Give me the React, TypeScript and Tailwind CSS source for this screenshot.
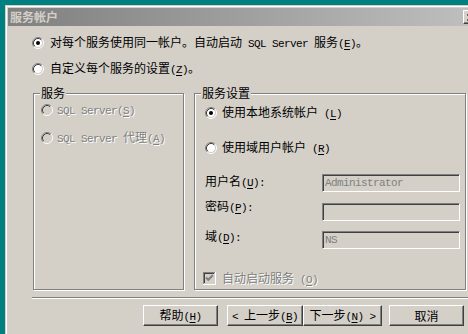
import React from "react";

const LATIN = "font-['Liberation_Mono',monospace] text-[11px] tracking-[-0.6px]";
const DIS = "text-[#808080] [text-shadow:1px_1px_0_#fff]";

function T({ s, className = "" }: { s: string; className?: string }) {
  const out: React.ReactNode[] = [];
  let i = 0;
  let k = 0;
  while (i < s.length) {
    const c = s[i];
    if (c === "&") {
      out.push(
        <span key={k++} className={LATIN + " underline underline-offset-2"}>
          {s[i + 1]}
        </span>
      );
      i += 2;
      continue;
    }
    const isAscii = c.charCodeAt(0) < 128;
    let j = i;
    while (j < s.length && s[j] !== "&" && (s.charCodeAt(j) < 128) === isAscii) j++;
    out.push(
      <span key={k++} className={isAscii ? LATIN : ""}>
        {s.slice(i, j)}
      </span>
    );
    i = j;
  }
  return <span className={"whitespace-pre " + className}>{out}</span>;
}

function Radio({ checked, disabled }: { checked?: boolean; disabled?: boolean }) {
  return (
    <svg width="12" height="12" viewBox="0 0 12 12" className="shrink-0">
      <circle cx="6" cy="6" r="4.2" fill={disabled ? "#d4d0c8" : "#ffffff"} />
      <path d="M2.11 9.89 A5.5 5.5 0 0 1 9.89 2.11" stroke="#808080" fill="none" />
      <path d="M9.89 2.11 A5.5 5.5 0 0 1 2.11 9.89" stroke="#ffffff" fill="none" />
      <path d="M2.82 9.18 A4.5 4.5 0 0 1 9.18 2.82" stroke="#404040" fill="none" />
      <path d="M9.18 2.82 A4.5 4.5 0 0 1 2.82 9.18" stroke="#d4d0c8" fill="none" />
      {checked && <circle cx="6" cy="6" r="2" fill={disabled ? "#808080" : "#000"} />}
    </svg>
  );
}

function Check() {
  return (
    <svg width="13" height="13" viewBox="0 0 13 13" className="shrink-0">
      <rect x="0" y="0" width="13" height="13" fill="#d4d0c8" />
      <path d="M0 0.5 H12 M0.5 0 V12" stroke="#808080" />
      <path d="M1 1.5 H11 M1.5 1 V11" stroke="#404040" />
      <path d="M0 12.5 H13 M12.5 0 V13" stroke="#ffffff" />
      <path d="M1 11.5 H12 M11.5 1 V12" stroke="#d4d0c8" />
      <path d="M3 5.5 L5.3 7.8 L9.8 3.3" stroke="#808080" strokeWidth="2" fill="none" />
    </svg>
  );
}

function Btn({ w, s }: { w: string; s: string }) {
  return (
    <div
      className={
        w +
        " h-[21px] flex items-center justify-center bg-[#d4d0c8] border border-t-white border-l-white border-r-[#404040] border-b-[#404040] shadow-[inset_-1px_-1px_0_#808080] text-black"
      }
    >
      <T s={s} />
    </div>
  );
}

function Field({ v }: { v?: string }) {
  return (
    <div className="w-[138px] h-[18px] border border-t-[#808080] border-l-[#808080] border-b-white border-r-white shadow-[inset_1px_1px_0_#404040,inset_-1px_-1px_0_#d4d0c8] bg-[#d4d0c8] flex items-center pl-[2px]">
      {v && <span className={LATIN + " text-[#808080]"}>{v}</span>}
    </div>
  );
}

function Group({ w, label, children }: { w: string; label: string; children: React.ReactNode }) {
  return (
    <div
      className={
        w +
        " h-[197px] relative border border-[#808080] shadow-[1px_1px_0_#fff,inset_1px_1px_0_#fff]"
      }
    >
      <div className="absolute top-[-8px] left-[6px] px-[1px] bg-[#d4d0c8] leading-[14px]">
        <T s={label} />
      </div>
      {children}
    </div>
  );
}

export default function App() {
  return (
    <div className="w-[468px] h-[334px] bg-[#008080] overflow-hidden pt-[5px] pl-[5px] font-['Noto_Sans_CJK_SC',sans-serif] text-[12px] leading-[14px] text-black">
      <div className="w-[478px] h-[340px] bg-[#d4d0c8] border-t border-l border-[#d4d0c8] shadow-[inset_1px_1px_0_#fff] p-[2px]">
        <div className="h-[18px] flex items-center justify-between bg-linear-to-r from-[#808080] to-[#c0c0c0] pl-[2px] pr-[2px]">
          <span className="font-bold text-[#d4d0c8] text-[12px]">服务帐户</span>
          <div className="w-[16px] h-[14px] bg-[#d4d0c8] border border-t-white border-l-white border-r-[#404040] border-b-[#404040] shadow-[inset_-1px_-1px_0_#808080] flex items-center justify-center">
            <svg width="8" height="7" viewBox="0 0 8 7">
              <path d="M0.5 0.5 L7 6.5 M7 0.5 L0.5 6.5" stroke="#000" strokeWidth="1.5" />
            </svg>
          </div>
        </div>
        <div className="flex flex-col">
          <div className="mt-[10px] h-[14px] flex items-center pl-[24px] gap-[6px]">
            <Radio checked />
            <T s="对每个服务使用同一帐户。自动启动 SQL Server 服务(&E)。" />
          </div>
          <div className="mt-[12px] h-[14px] flex items-center pl-[24px] gap-[6px]">
            <Radio />
            <T s="自定义每个服务的设置(&Z)。" />
          </div>
          <div className="mt-[17px] flex pl-[25px] gap-[10px]">
            <Group w="w-[151px]" label="服务">
              <div className="flex flex-col pt-[9px] pl-[7px]">
                <div className="h-[14px] flex items-center gap-[4px]">
                  <Radio disabled />
                  <T s="SQL Server(&S)" className={DIS} />
                </div>
                <div className="mt-[14px] h-[14px] flex items-center gap-[4px]">
                  <Radio disabled />
                  <T s="SQL Server 代理(&A)" className={DIS} />
                </div>
              </div>
            </Group>
            <Group w="w-[272px]" label="服务设置">
              <div className="flex flex-col pt-[12px] pl-[10px]">
                <div className="h-[14px] flex items-center gap-[5px]">
                  <Radio checked />
                  <T s="使用本地系统帐户 (&L)" />
                </div>
                <div className="mt-[21px] h-[14px] flex items-center gap-[5px]">
                  <Radio />
                  <T s="使用域用户帐户 (&R)" />
                </div>
                <div className="mt-[19px] flex items-start">
                  <div className="w-[117px]">
                    <T s="用户名(&U):" />
                  </div>
                  <Field v="Administrator" />
                </div>
                <div className="mt-[11px] flex items-start">
                  <div className="w-[117px] mt-[-4px]">
                    <T s="密码(&P):" />
                  </div>
                  <Field />
                </div>
                <div className="mt-[10px] flex items-start">
                  <div className="w-[117px] mt-[-2px]">
                    <T s="域(&D):" />
                  </div>
                  <Field v="NS" />
                </div>
                <div className="mt-[23px] ml-[-2px] h-[13px] flex items-center gap-[6px]">
                  <Check />
                  <T s="自动启动服务 (&O)" className={DIS} />
                </div>
              </div>
            </Group>
          </div>
          <div className="mt-[7px] ml-[24px] h-[2px] border-t border-t-[#808080] border-b border-b-white" />
          <div className="mt-[6px] flex pl-[135px]">
            <Btn w="w-[75px]" s="帮助(&H)" />
            <div className="ml-[9px] flex">
              <Btn w="w-[76px]" s="< 上一步(&B)" />
              <Btn w="w-[79px]" s="下一步(&N) >" />
            </div>
            <div className="ml-[7px]">
              <Btn w="w-[75px]" s="取消" />
            </div>
          </div>
        </div>
      </div>
    </div>
  );
}
